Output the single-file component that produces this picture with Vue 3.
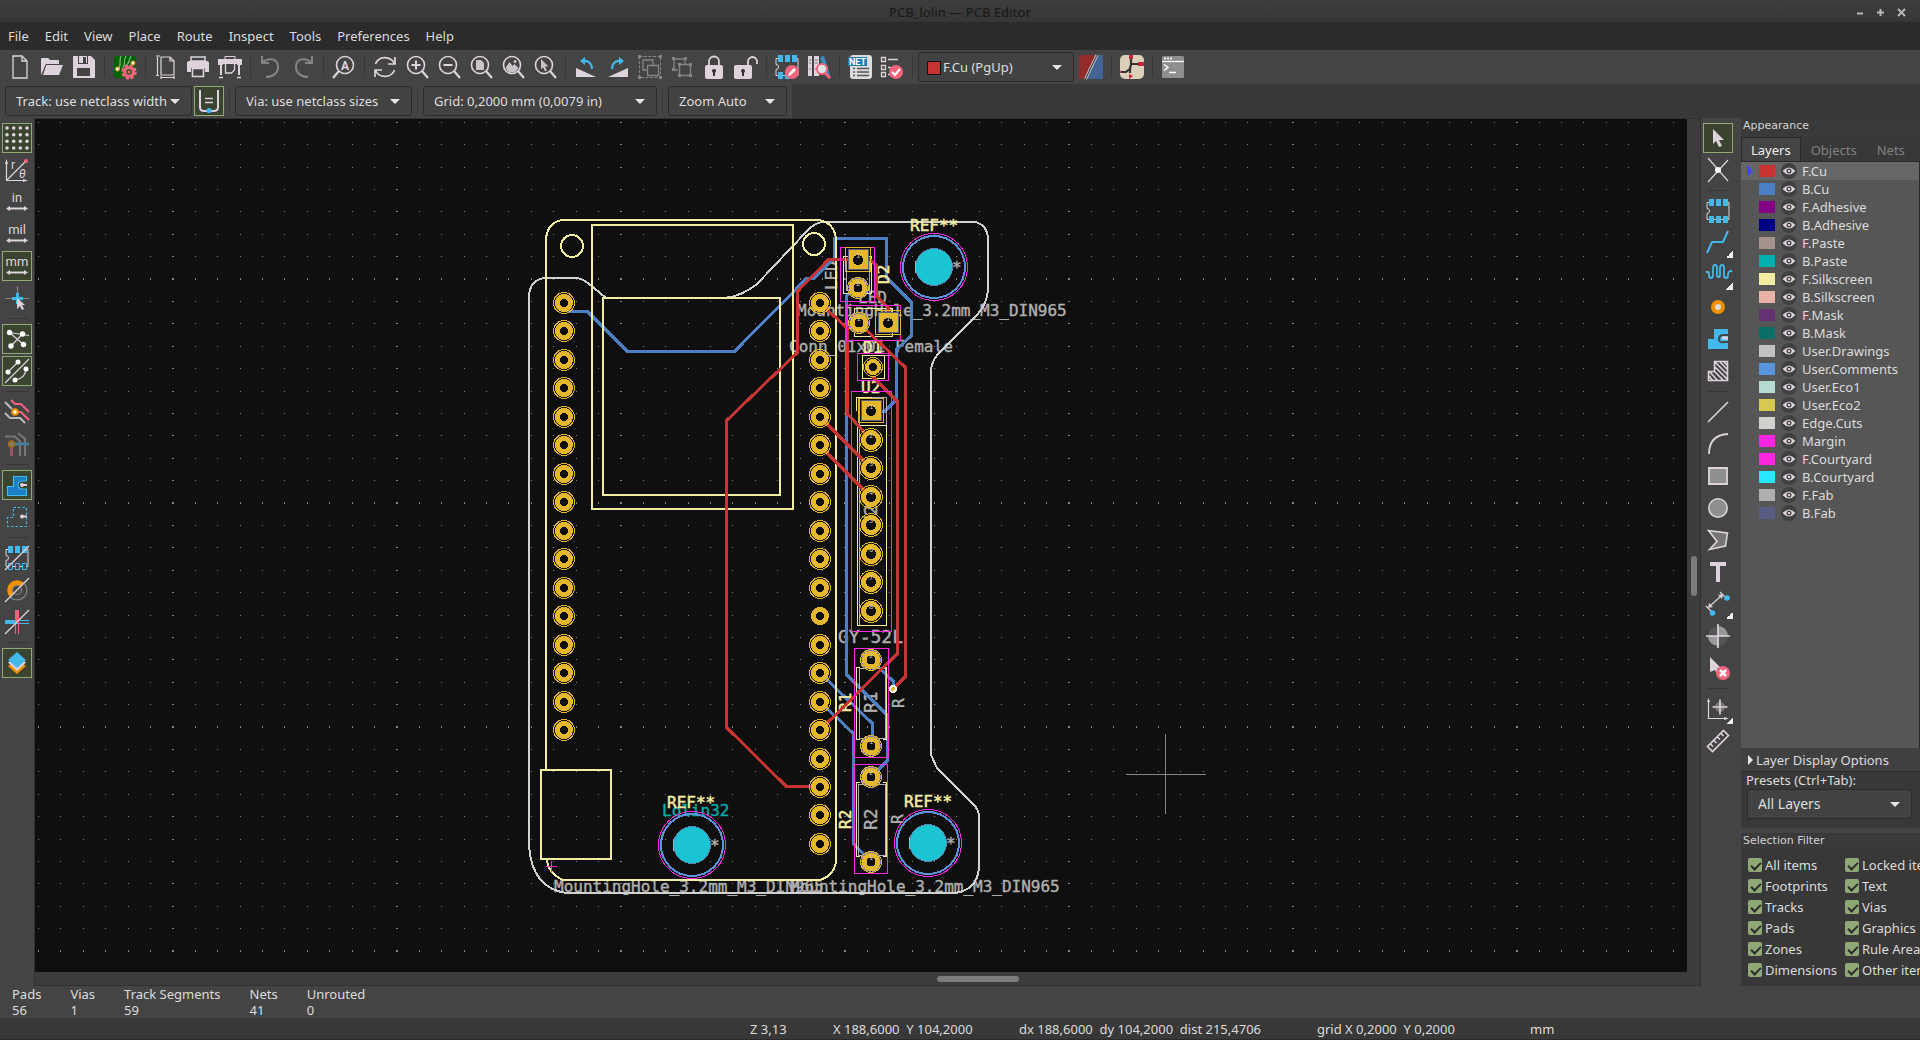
<script setup>
import { ref } from 'vue'

const L = '#ded3dd'
const B = '#42b8eb'
const G = '#848484'
const R = '#f2647e'
const O = '#f29100'

const lens = `<circle cx="11" cy="10" r="8.5" fill="none" stroke="${L}" stroke-width="1.6"/><path d="M17 16l6 7" stroke="${L}" stroke-width="2.2"/>`
const chipBody = `<path d="M3.500 3.500H1V9.500a2.500 2.500 0 0 1 0 5V20.500H23V3.500H20" fill="none" stroke="${L}" stroke-width="1"/>`
const curve = (flip) => `<g${flip ? ' transform="matrix(-1 0 0 1 24 0)"' : ''}><path d="M3 1v7h7M3.500 7.500C8 3 18 2 19 11c.5 7-5 11-12 11" fill="none" stroke="${G}" stroke-width="2"/></g>`
const arrows = `<path d="M1 18.500l4-2.500v1.500h14V16l4 2.500-4 2.500v-1.500H5V21z" fill="${L}"/>`
const unit = (t) => `<text x="12" y="12" text-anchor="middle" font-family="Roboto, sans-serif" font-size="13" fill="${L}">${t}</text>${arrows}`
const pointer = `M7 3l11 11h-5l3 6-3 1-3-6-3 3z`

const icons = {
  new: `<path d="M5 1h9l5 5v17H5zM14 1v5h5" fill="none" stroke="${L}" stroke-width="1.300"/>`,
  open: `<path d="M1 20V4q0-1 1-1h6l2 2h8q1 0 1 1v3H6z" fill="${L}"/><path d="M6 10h17l-4 10H2z" fill="${L}"/><path d="M2.500 20L6 9.500h17" fill="none" stroke="#444" stroke-width="1"/>`,
  save: `<path d="M1 1h18l4 4v18H1z" fill="${L}"/><path d="M6 1h10v8H6z" fill="#444"/><path d="M7 1h8v7H7z" fill="${L}"/><path d="M11 2h3v6h-3zM5 13h13v8H5z" fill="#444"/>`,
  setup: `<rect x="1" y="1" width="22" height="22" rx="3" fill="#006400"/><path d="M8 1C5 8 10 9 4 16M13 1C9 8 14 9 9 14M18 1c-3 5-1 8-6 10" fill="none" stroke="#7fb07f" stroke-width="1.300"/><circle cx="4.500" cy="14" r="2" fill="#fff" stroke="${O}"/><circle cx="20" cy="8" r="2" fill="#fff" stroke="${O}"/><circle cx="16" cy="17" r="4.500" fill="#006400" stroke="${R}" stroke-width="3.500"/><circle cx="16" cy="17" r="6.500" fill="none" stroke="${R}" stroke-width="2.500" stroke-dasharray="3.100 2"/><circle cx="16" cy="17" r="1.500" fill="${R}"/>`,
  page: `<path d="M7 2h9l4 4v14H7zM16 2v4h4M3.500 2v18M2 1h4M2 20.500h3M7 22.500h13M7 21v3M20 21v3" fill="none" stroke="${L}" stroke-width="1.200"/>`,
  print: `<path d="M5 2h14v4H5z" fill="none" stroke="${L}" stroke-width="1.500"/><path d="M3 6h18q2 0 2 2v9h-4v-4H5v4H1V8q0-2 2-2z" fill="${L}"/><path d="M6.500 13.500h11v8h-11z" fill="none" stroke="${L}" stroke-width="1.600"/>`,
  plot: `<path d="M7 1.500h10v3H7z" fill="none" stroke="${L}"/><path d="M0 4h24v6h-5V9H5v1H0zM2 10h2v10H2zM20 10h2v10h-2z" fill="${L}"/><path d="M7.500 9v9h6l3-3V9M1 22.500h4M19 22.500h4" fill="none" stroke="${L}" stroke-width="1.300"/>`,
  undo: curve(false),
  redo: curve(true),
  find: `<g transform="matrix(-1 0 0 1 24 0)">${lens}</g><text x="13" y="14.500" text-anchor="middle" font-family="Roboto, sans-serif" font-weight="700" font-size="12" fill="${L}">A</text>`,
  refresh: `<path d="M22 2v7h-7M2 22v-7h7M21.500 8.500C18 1 6 0 2.500 9M2.500 15.500C6 23 18 24 21.500 15" fill="none" stroke="${L}" stroke-width="1.700"/>`,
  zin: `${lens}<path d="M6.500 10h9M11 5.500v9" stroke="${L}" stroke-width="2"/>`,
  zout: `${lens}<path d="M6.500 10h9" stroke="${L}" stroke-width="2"/>`,
  zfit: `${lens}<path d="M7 5h5l3 3v7H7z" fill="#c9c3c8"/>`,
  zobj: `${lens}<path d="M4.500 13l4-6 3 4 2-2 4 4q-3 5-7 4.500t-6-4.500z" fill="#c9c3c8"/><circle cx="14" cy="6.500" r="1.500" fill="#c9c3c8"/>`,
  zsel: `${lens}<path d="M8 4l7.500 7.500h-3.500l2 4-2 .8-2-4-2 2z" fill="#c9c3c8"/>`,
  ccw: `<path d="M2 13v9h20z" fill="${L}"/><path d="M9 6c6-1 9 3 9 8" fill="none" stroke="${B}" stroke-width="2.200"/><path d="M11 2v8L6 6z" fill="${B}"/>`,
  cw: `<path d="M22 13v9H2z" fill="${L}"/><path d="M15 6c-6-1-9 3-9 8" fill="none" stroke="${B}" stroke-width="2.200"/><path d="M13 2v8l5-4z" fill="${B}"/>`,
  group: `<path d="M1.500 1.500h21v21h-21z" fill="none" stroke="${G}" stroke-dasharray="3 1.500"/><path d="M9 15H5V5h10v5M9.500 10.500h11v10h-11z" fill="none" stroke="${G}" stroke-width="1.300"/><path d="M0 0h3v3H0zM21 0h3v3h-3zM0 21h3v3H0zM21 21h3v3h-3z" fill="${G}"/>`,
  ungroup: `<path d="M8 15H4V4h11v5M9.500 9.500h11v11h-11z" fill="none" stroke="${G}" stroke-width="1.300"/><path d="M2 2h3v3H2zM14 2h3v3h-3zM2 13h3v3H2zM8 8h3v3H8zM19 8h3v3h-3zM19 19h3v3h-3zM8 19h3v3H8z" fill="${G}"/>`,
  lock: `<rect x="3" y="10" width="18" height="14" rx="2" fill="${L}"/><path d="M7 10V6.500a5 5 0 0 1 10 0V10" fill="none" stroke="${L}" stroke-width="1.800"/><circle cx="12" cy="16" r="2" fill="#333"/><path d="M11 16h2v5h-2z" fill="#333"/>`,
  unlock: `<rect x="0" y="10" width="18" height="14" rx="2" fill="${L}"/><path d="M14 10V6.500a4.500 4.500 0 0 1 9 0V9" fill="none" stroke="${L}" stroke-width="1.800"/><circle cx="9" cy="16" r="2" fill="#333"/><path d="M8 16h2v5H8z" fill="#333"/>`,
  fped: `${chipBody}<path d="M3 0h5v7H3zM10 0h5v7h-5zM17 0h5v7h-5zM3 17h5v7H3zM10 17h5v7h-5z" fill="${B}"/><circle cx="17" cy="17" r="7" fill="${R}"/><path d="M13 21l1-3 5-5 2 2-5 5z" fill="#fff"/>`,
  lib: `<path d="M1 1h4v20H1zM7 1h5v20H7z" fill="${L}"/><path d="M2 5h2M2 8h2M8 5h3M8 8h3M2 14h2M8 14h3" stroke="#777"/><path d="M13 2l4-1 6 19-4 1z" fill="#2f8fc0"/><circle cx="15" cy="14" r="5" fill="#dfe6ea" stroke="${R}" stroke-width="2"/><path d="M18 18l5 5" stroke="${R}" stroke-width="3"/>`,
  net: `<rect x="2" y="0" width="22" height="24" rx="3" fill="#dcdcdc"/><path d="M5 13.500h2M9 13.500h12M5 17h2M9 17h12M5 20.500h2M9 20.500h12" stroke="#555" stroke-width="1.700"/><path d="M0 2h19v9H0z" fill="#1a81b0"/><text x="9.500" y="10" text-anchor="middle" font-family="Roboto, sans-serif" font-weight="700" font-size="9" fill="#fff">NET</text>`,
  drc: `<path d="M1.500 2.500h4v4h-4zM1.500 10.500h4v4h-4zM1.500 17.500h4v4h-4z" fill="none" stroke="${L}" stroke-width="1.300"/><path d="M8 4.500h10M8 12.500h3M8 19.500h2" stroke="${L}" stroke-width="1.300"/><circle cx="16" cy="17" r="7" fill="${R}"/><path d="M12 17l3 3 5-6" fill="none" stroke="#fff" stroke-width="2"/>`,
  pair: `<path d="M0 0h24v24H0z" fill="#436395"/><path d="M0 0h17L6 24H0z" fill="#942a2a"/><path d="M18 0L6.500 24" stroke="#bbb" stroke-width="3"/><path d="M18 0L6.500 24" stroke="#333" stroke-width="1"/>`,
  board: `<rect width="24" height="24" rx="5" fill="#ddd0b8"/><path d="M11 3v7l-1 3v5M11 9h9M1 17h5l5-4" fill="none" stroke="#333" stroke-width="2.200"/><path d="M9 0h4v4H9zM18 7h6v4h-6zM0 14l1 4h-1zM9 19l4 2-4 3z" fill="#c8243f"/>`,
  console: `<rect x="1" y="1" width="22" height="22" rx="1.500" fill="#8f8f8f"/><path d="M1 6.500h22" stroke="#fff" stroke-width="1.200"/><path d="M3 3.500h2M6 3.500h2M9 3.500h2" stroke="#fff" stroke-width="1.500"/><path d="M3 9.500l4 3-4 3M8 17.500h7" fill="none" stroke="#fff" stroke-width="1.500"/>`,
  auto: `<path d="M3 1v17q0 4 4 4h10q4 0 4-4V1" fill="none" stroke="${L}" stroke-width="2"/><path d="M8 9.500h8M8 13.500h8" stroke="${L}" stroke-width="1.300"/><circle cx="12" cy="21.500" r="2.600" fill="${B}"/>`,

  grid: [2, 8.7, 15.3, 22].map((y) => [2, 8.7, 15.3, 22].map((x) => `<circle cx="${x}" cy="${y}" r="1.800" fill="${L}"/>`).join('')).join(''),
  polar: `<path d="M1.500 3v19.500H22M2 22L21 3" fill="none" stroke="${L}" stroke-width="1.200"/><path d="M0 6l1.500-5L3 6zM18 21l5 1.500-5 1.500z" fill="${L}"/><circle cx="21" cy="3" r="2" fill="${R}"/><text x="6" y="11" font-family="Roboto, sans-serif" font-size="12" fill="${L}">r</text><text x="14" y="20" font-family="Roboto, sans-serif" font-style="italic" font-size="12" fill="${L}">θ</text>`,
  in: unit('in'),
  mil: unit('mil'),
  mm: unit('mm'),
  cursor: `<path d="M12.500 0v12M0 12.500h24" stroke="${G}" stroke-width="1.200"/><path d="M12.500 7v11M7 12.500h11" stroke="${B}" stroke-width="3"/><path d="M12 12l8 7h-3l2 4-2 1-2-4-3 3z" fill="${L}"/>`,
  rats: `<path d="M4.500 5.500L24 8.500M4.500 5.500L18.500 17.500M17.500 7L6 19" stroke="${L}" stroke-width="1.200"/><g fill="#fff"><circle cx="4.500" cy="5.500" r="2.700"/><circle cx="17.500" cy="7" r="2.700"/><circle cx="6" cy="19" r="2.700"/><circle cx="18.500" cy="17.500" r="2.700"/></g>`,
  curved: `<path d="M0 24L24 0M3 13L13 3M10 21q10-1 11-11" fill="none" stroke="${L}" stroke-width="1.200"/><g fill="#fff"><circle cx="3" cy="13" r="2.500"/><circle cx="13" cy="3" r="2.500"/><circle cx="10" cy="21" r="2.500"/><circle cx="21" cy="10" r="2.500"/></g>`,
  hc: `<path d="M0 2l7 7M0 13l5 5h10l5 5" fill="none" stroke="#bbb" stroke-width="2"/><path d="M6 0l4 4h6l8 8M10 12h6l8 8" fill="none" stroke="${R}" stroke-width="2"/><circle cx="10" cy="12" r="2.800" fill="#fff" stroke="${O}" stroke-width="2"/>`,
  hc2: `<g opacity=".5"><path d="M0 4.500h10l5 5V24M13 1l7 6v17" fill="none" stroke="#aaa" stroke-width="2"/><path d="M10 12h14" stroke="${B}" stroke-width="3"/><path d="M6.500 14v10" stroke="${R}" stroke-width="3"/><circle cx="6.500" cy="12" r="2.800" fill="#bbb" stroke="${O}" stroke-width="2"/></g>`,
  zone: `<path d="M8.500 3.500h13V8H18q-5 0-5 4t5 4h3.500v6.500h-19v-9h6z" fill="#1a7fc4" stroke="${B}" stroke-width="1.200"/><path d="M17 12h5" stroke="${L}" stroke-width="2"/><circle cx="17" cy="12" r="2" fill="${L}"/>`,
  zone2: `<path d="M8.500 2.500h13v19h-19v-9h6z" fill="none" stroke="${B}" stroke-width="1.200" stroke-dasharray="2.500 2"/><path d="M17 11.500h5" stroke="${L}" stroke-width="2"/><circle cx="17" cy="11.500" r="2" fill="${L}"/>`,
  pads: `${chipBody}<path d="M3 0h5v7H3zM10 0h5v7h-5zM17 0h5v7h-5z" fill="${B}"/><path d="M3.500 17.500h4v6h-4zM10.500 17.500h4v6h-4zM17.500 17.500h4v6h-4z" fill="#444" stroke="${B}"/><path d="M0 24L24 0" stroke="${L}" stroke-width="1.300"/>`,
  vias: `<path d="M6.700 17.300A7.500 7.500 0 0 1 17.300 6.700" fill="none" stroke="${O}" stroke-width="5"/><circle cx="12" cy="12" r="4.500" fill="none" stroke="${G}" stroke-width="1.200"/><path d="M5 19A9.500 9.500 0 0 0 19 5" fill="none" stroke="${G}" stroke-width="1.200"/><path d="M0 24L24 0" stroke="${L}" stroke-width="1.300"/>`,
  tracks: `<path d="M0 12h12" stroke="${B}" stroke-width="4"/><path d="M12 10.500h12M12 13.500h12" stroke="${B}"/><path d="M12 0v12" stroke="${R}" stroke-width="4"/><path d="M10.500 12v12M13.500 12v12" stroke="${R}"/><path d="M0 24L24 0" stroke="${L}" stroke-width="1.300"/>`,
  layers: `<path d="M12 9l9 6-9 8-9-8z" fill="${O}"/><path d="M12 6l9 5.500L12 20l-9-8.500z" fill="${L}"/><path d="M12 1l9 8-9 8-9-8z" fill="${B}"/>`,

  select: `<path d="${pointer}" fill="${L}"/>`,
  local: `<path d="M2 0l20 23M22 2L2 24" stroke="${L}" stroke-width="1.200"/><circle cx="12" cy="12" r="3" fill="#fff"/>`,
  fp: `${chipBody}<path d="M3 0h5v7H3zM10 0h5v7h-5zM17 0h5v7h-5zM3 17h5v7H3zM10 17h5v7h-5zM17 17h5v7h-5z" fill="${B}"/>`,
  route: `<path d="M1 22l5-11h11l5-11" fill="none" stroke="${B}" stroke-width="2"/>`,
  tune: `<path d="M0 9h2q1 0 1 3t2 3 2-3V5q0-3 2-3t2 3v7q0 2 1.500 2t1.500-2V5q0-3 2-3t2 3v7q0 3 2 3t2-3 2-4h2" fill="none" stroke="${B}" stroke-width="1.800"/>`,
  via: `<circle cx="12" cy="12" r="5" fill="#ddd" stroke="${O}" stroke-width="4"/>`,
  fill: `<path d="M8 2h14v20H2V12h6z" fill="${B}"/><path d="M22 8h-4q-5 0-5 4t5 3h4" fill="none" stroke="#444" stroke-width="2"/><path d="M16 11h6" stroke="${L}" stroke-width="3"/>`,
  rule: `<path d="M8.500 2.500h13v19h-19v-9h6zM9 3l13 13M14 3l8 8M18 3l4 4M9 8l13 13M8 12l10 10M3 12l9 10M3 17l4 5" fill="none" stroke="${L}" stroke-width="1.600"/>`,
  line: `<path d="M2 22L22 2" stroke="${L}" stroke-width="1.600"/>`,
  arc: `<path d="M3 22Q3 3 22 2" fill="none" stroke="${L}" stroke-width="1.800"/>`,
  rect: `<path d="M3 4h18v16H3z" fill="#8f8f8f" stroke="${L}" stroke-width="1.800"/>`,
  circle: `<circle cx="12" cy="12" r="9.200" fill="#8f8f8f" stroke="${L}" stroke-width="1.600"/>`,
  poly: `<path d="M2.500 2.500L21.500 5l-2 13-16 3.500 7.500-8z" fill="#777" stroke="${L}" stroke-width="1.600"/>`,
  text: `<path d="M4 2h16v4h-6v16h-4V6H4z" fill="${L}"/>`,
  dim: `<path d="M0 14l6 6M14 0l6 6M4 14L15 4" stroke="${L}" stroke-width="1.200"/><path d="M2 16l1-5 4 4zM17 2l-1 5-4-4z" fill="${L}"/><circle cx="21" cy="6" r="2.800" fill="${B}"/><circle cx="6.500" cy="21" r="2.800" fill="${B}"/>`,
  target: `<circle cx="12" cy="12" r="10" fill="#555"/><path d="M12 2v20A10 10 0 0 1 2 12h20A10 10 0 0 0 12 2z" fill="#999"/><path d="M0 12h24M12 0v24" stroke="${L}" stroke-width="1.700"/>`,
  del: `<path d="M4 1l11 11h-4l3 5-3 1-2-4-5 2z" fill="${L}"/><circle cx="17" cy="17" r="7" fill="${R}"/><path d="M14 14l6 6M20 14l-6 6" stroke="#fff" stroke-width="2.500"/>`,
  origin: `<path d="M2.500 4v17.500H20" fill="none" stroke="${L}" stroke-width="1.200"/><path d="M1 5l1.500-4L4 5zM18 20l5 1.500-5 1.500z" fill="${L}"/><circle cx="14" cy="10" r="5" fill="#777"/><path d="M6.500 10h15M14 2.500v15" stroke="${L}" stroke-width="1.600"/>`,
  ruler: `<path d="M17.500 1.500l5 5-16 16-5-5zM8 11.500l2.500 2.500M11.500 8l2.500 2.500M15 4.500l2.500 2.500M4.500 15l2.500 2.500" fill="none" stroke="${L}" stroke-width="1.600"/>`
}

const menus = ['File', 'Edit', 'View', 'Place', 'Route', 'Inspect', 'Tools', 'Preferences', 'Help']
const mainTools = ['new', 'open', 'save', '|', 'setup', '|', 'page', 'print', 'plot', '|', 'undo', 'redo', '|', 'find', '|', 'refresh', 'zin', 'zout', 'zfit', 'zobj', 'zsel', '|', 'ccw', 'cw', 'group', 'ungroup', 'lock', 'unlock', '|', 'fped', 'lib', '|', 'net', 'drc', '|', '#', 'pair', '|', 'board', '|', 'console']
const leftTools = ['grid', 'polar', 'in', 'mil', 'mm', 'cursor', '|', 'rats', 'curved', '|', 'hc', 'hc2', '|', 'zone', 'zone2', '|', 'pads', 'vias', 'tracks', '|', 'layers']
const leftOn = ['grid', 'mm', 'rats', 'curved', 'zone', 'layers']
const rightTools = ['select', 'local', '|', 'fp', 'route', 'tune', 'via', 'fill', 'rule', '|', 'line', 'arc', 'rect', 'circle', 'poly', 'text', 'dim', 'target', 'del', '|', 'origin', 'ruler']
const flyouts = ['route', 'tune', 'dim', 'origin']

const tab = ref('Layers')
const layer = ref('F.Cu')
const layers = [
  ['F.Cu', '#c83434'], ['B.Cu', '#4d7fc4'], ['F.Adhesive', '#840084'], ['B.Adhesive', '#000084'],
  ['F.Paste', '#a5948e'], ['B.Paste', '#00b0b0'], ['F.Silkscreen', '#f2eda1'], ['B.Silkscreen', '#e8b2a7'],
  ['F.Mask', '#63326f'], ['B.Mask', '#0a6f69'], ['User.Drawings', '#c2c2c2'], ['User.Comments', '#5994dc'],
  ['User.Eco1', '#b4dbd2'], ['User.Eco2', '#d8c852'], ['Edge.Cuts', '#d0d2cd'], ['Margin', '#ff26e2'],
  ['F.Courtyard', '#ff26e2'], ['B.Courtyard', '#26e9ff'], ['F.Fab', '#afafaf'], ['B.Fab', '#585d84']
]
const filters = ref(['All items', 'Locked items', 'Footprints', 'Text', 'Tracks', 'Vias', 'Pads', 'Graphics', 'Zones', 'Rule Areas', 'Dimensions', 'Other items'].map((name) => ({ name, on: true })))
const stats = [['Pads', '56'], ['Vias', '1'], ['Track Segments', '59'], ['Nets', '41'], ['Unrouted', '0']]

/* board grid: one dot every 22.4 px, every tenth row and column heavier */
let dots = ''
for (let j = -7; j < 80; j++) {
  const y = Math.floor(279.1 + j * 22.4)
  const tall = j % 10 === 0
  for (let i = -6; i < 120; i++) {
    const x = Math.floor(172.8 + i * 22.4)
    const wide = i % 10 === 0
    dots += `M${wide ? x : x} ${tall ? y - 1 : y}h${wide ? 2 : 1}v${tall ? 2 : 1}h-${wide ? 2 : 1}z`
  }
}

const rowY = (k) => Math.round(303 + k * 28.47)
const modulePads = [
  ...Array.from({ length: 16 }, (_, k) => ({ x: 564, y: rowY(k), ring: true })),
  ...Array.from({ length: 20 }, (_, k) => ({ x: 820, y: rowY(k), ring: k !== 11 }))
]
const squarePads = [{ x: 858, y: 260, n: 1 }, { x: 888, y: 323, n: 1 }, { x: 871, y: 411, n: 1 }]
const headerPads = [440, 468, 497, 525, 554, 582, 611].map((y, i) => ({ x: 871, y, n: i + 2 }))
const roundPads = [
  { x: 858, y: 288, n: 2 }, { x: 859, y: 323, n: 2 },
  { x: 871, y: 660, n: 2 }, { x: 871, y: 746, n: 1 }, { x: 871, y: 777, n: 2 }, { x: 871, y: 862, n: 1 }
]
const holes = [{ x: 934, y: 267 }, { x: 928, y: 843 }, { x: 692, y: 845 }]
</script>

<template>
  <div class="app">
    <header class="title">
      <h1>PCB_lolin — PCB Editor</h1>
      <div class="win">
        <button aria-label="Minimize"><svg width="9" height="9"><path d="M2 5.500h6" /></svg></button>
        <button aria-label="Maximize"><svg width="9" height="9"><path d="M1 4.500h7M4.500 1v7" /></svg></button>
        <button aria-label="Close"><svg width="9" height="9"><path d="M1 1l7 7M8 1l-7 7" /></svg></button>
      </div>
    </header>
    <nav class="menu"><button v-for="m in menus" :key="m">{{ m }}</button></nav>

    <div class="bar">
      <template v-for="(t, i) in mainTools" :key="i">
        <span v-if="t === '|'" class="sep"></span>
        <span v-else-if="t === '#'" class="pick layer-pick">
          <select aria-label="Active layer"><option>F.Cu (PgUp)</option></select>
          <i class="chip"></i><svg class="caret" width="10" height="5"><path d="M0 0h10L5 5z" /></svg>
        </span>
        <button v-else class="tool" :aria-label="t"><svg width="24" height="24" viewBox="0 0 24 24" v-html="icons[t]"></svg></button>
      </template>
    </div>

    <div class="row2">
      <div class="bar">
        <span class="pick track"><select aria-label="Track width"><option>Track: use netclass width</option></select><svg class="caret" width="10" height="5"><path d="M0 0h10L5 5z" /></svg></span>
        <button class="tool on" aria-label="auto"><svg width="24" height="24" viewBox="0 0 24 24" v-html="icons.auto"></svg></button>
        <span class="sep"></span>
        <span class="pick via"><select aria-label="Via size"><option>Via: use netclass sizes</option></select><svg class="caret" width="10" height="5"><path d="M0 0h10L5 5z" /></svg></span>
        <span class="sep"></span>
        <span class="pick gridsel"><select aria-label="Grid"><option>Grid: 0,2000 mm (0,0079 in)</option></select><svg class="caret" width="10" height="5"><path d="M0 0h10L5 5z" /></svg></span>
        <span class="sep"></span>
        <span class="pick zoom"><select aria-label="Zoom"><option>Zoom Auto</option></select><svg class="caret" width="10" height="5"><path d="M0 0h10L5 5z" /></svg></span>
      </div>
    </div>

    <main class="work">
      <div class="side">
        <template v-for="(t, i) in leftTools" :key="i">
          <span v-if="t === '|'" class="hsep"></span>
          <button v-else class="tool" :class="{ on: leftOn.includes(t) }" :aria-label="t"><svg width="24" height="24" viewBox="0 0 24 24" v-html="icons[t]"></svg></button>
        </template>
      </div>

      <section class="view">
        <svg class="board">
          <g transform="translate(-35 -119)" shape-rendering="crispEdges">
            <path :d="dots" fill="#858585" />

            <g class="mono fab">
              <text x="797" y="316">MountingHole_3.2mm_M3_DIN965</text>
              <text x="554" y="892">MountingHole_3.2mm_M3_DIN965</text>
              <text x="790" y="892">MountingHole_3.2mm_M3_DIN965</text>
              <text x="789" y="352">Conn_01x01_Female</text>
              <text x="858" y="303">LED</text>
              <text class="big" x="838" y="643">GY-52L</text>
              <text transform="translate(837 290) rotate(-90)">LED</text>
              <text class="big" transform="translate(877 526) rotate(-90)">U2</text>
              <text class="big" transform="translate(877 713) rotate(-90)">R1</text>
              <text class="big" transform="translate(877 830) rotate(-90)">R2</text>
              <text transform="translate(904 708) rotate(-90)">R</text>
              <text transform="translate(903 824) rotate(-90)">R</text>
            </g>
            <text class="mono teal" x="662" y="816">Lolin32</text>

            <g fill="none" stroke="#4d7fc4" stroke-width="3">
              <path d="M567 311H587L627 351H735L807 278H814L834 259V238H886V277L911 302V336L896 350V400L885 411H874" />
              <path d="M858 288L846 296V674L887 715L888 760L871 777" />
              <path d="M820 673L872 723V746" />
              <path d="M820 702L853 733V843L871 862" />
              <path d="M871 660L893 681V689" />
            </g>

            <path d="M529 846V296Q530 279 546 278H577Q583 279 588 283L606 298H725Q742 296 757 284L807 231Q815 222 824 222H975Q988 225 988 240V290Q987 304 977 315L942 350Q931 360 931 371V755L937 768L975 806Q979 811 979 817V868Q977 890 955 893H566Q532 888 529 846Z" fill="none" stroke="#d0d2cd" stroke-width="2" />

            <path d="M859.500 397.500h27v228h-27zM859.500 668.500h26v70h-26zM858.500 784.500h27v71h-27zM846.500 258.500h23v32h-23z" fill="none" stroke="#afafaf" />
            <g class="silk">
              <path d="M546 769V240Q547 222 563 220H819Q835 223 836 240V862Q833 877 819 880H563Q548 873 547 860" />
              <path d="M541 770h70v89h-70zM592 225h201v284H592zM603 298h177v197H603z" />
              <circle cx="572" cy="246" r="11" /><circle cx="814" cy="244" r="11" />
              <path class="thin" d="M857.500 425.500h29v200h-29zM856.500 411V397.500h15M843.500 256.500h28v37h-28zM854.500 308.500h38v28h-38zM862.500 355.500h22v23h-22zM860 667.500h-3.500v72h3.500M883 667.500h3.500v72h-3.500M860 782.500h-3.500v74h3.500M883 782.500h3.500v74h-3.500" />
            </g>
            <g class="mono silktext">
              <text x="910" y="231">REF**</text><text x="904" y="807">REF**</text><text x="667" y="808">REF**</text>
              <text x="863" y="353">D1</text><text x="861" y="393">U2</text>
              <text transform="translate(889 284) rotate(-90)">D2</text>
              <text transform="translate(851 712) rotate(-90)">R1</text>
              <text transform="translate(851 829) rotate(-90)">R2</text>
            </g>

            <g fill="none" stroke="#c83434" stroke-width="3">
              <path d="M858 259H829L797 292V353L726 421V727L786 786H820" />
              <path d="M858 259H869L876 265V295L888 308V323" />
              <path d="M820 303L847 328V413L871 440" />
              <path d="M859 323L905 367V677L893 689" />
              <path d="M873 377L897 401V654L820 730" />
              <path d="M820 417L871 468M820 446L871 497" />
            </g>

            <path d="M851.500 391.500h40v240h-40zM840.500 247.500h34v54h-34zM846.500 305.500h54v35h-54zM857.500 353.500h31v27h-31zM854.500 648.500h34v109h-34zM854.500 764.500h33v109h-33zM546 866.500h11M551.500 861v11" fill="none" stroke="#ff26e2" />

            <g v-for="(p, i) in modulePads" :key="'m' + i">
              <circle v-if="p.ring" :cx="p.x" :cy="p.y" r="10.500" class="ring" />
              <circle :cx="p.x" :cy="p.y" r="6.500" class="pad" stroke-width="5" />
            </g>
            <g v-for="(p, i) in headerPads" :key="'h' + i">
              <circle :cx="p.x" :cy="p.y" r="11.500" class="ring" />
              <circle :cx="p.x" :cy="p.y" r="7.500" class="pad" stroke-width="5" />
              <text :x="p.x" :y="p.y - 2" class="num">{{ p.n }}</text>
            </g>
            <g v-for="(p, i) in roundPads" :key="'r' + i">
              <circle :cx="p.x" :cy="p.y" r="7" class="pad" stroke-width="5" />
              <circle :cx="p.x" :cy="p.y" r="10.500" class="ring" />
              <circle :cx="p.x" :cy="p.y" r="9.500" fill="none" stroke="#7a7fae" stroke-dasharray="2 1" />
              <text :x="p.x" :y="p.y - 2" class="num">{{ p.n }}</text>
            </g>
            <circle cx="873" cy="367" r="9.500" class="ring" /><circle cx="873" cy="367" r="6" class="pad" stroke-width="4" />
            <g v-for="(p, i) in squarePads" :key="'s' + i">
              <rect :x="p.x - 12.5" :y="p.y - 12.5" width="25" height="24" class="ring" />
              <rect :x="p.x - 9.5" :y="p.y - 10.5" width="20" height="20" fill="#e5b72d" stroke="#585d84" />
              <circle :cx="p.x" :cy="p.y" r="5" fill="#0f0f0f" />
              <text :x="p.x" :y="p.y - 2" class="num">{{ p.n }}</text>
            </g>
            <circle cx="893" cy="689" r="3" fill="#e5b72d" stroke="#fff" stroke-width="2" />

            <g v-for="(h, i) in holes" :key="'o' + i" fill="none">
              <circle :cx="h.x" :cy="h.y" r="33.500" stroke="#ff26e2" />
              <circle :cx="h.x" :cy="h.y" r="31" stroke="#5994dc" stroke-width="2" />
              <circle :cx="h.x" :cy="h.y" r="18.500" fill="#1ac4d2" stroke="#5c7fae" />
              <path :d="`M${h.x - 18.5} ${h.y - 6}v12`" stroke="#c9a0c9" />
              <text class="mono fab" :x="h.x + 18" :y="h.y + 6">*</text>
            </g>

            <path d="M1126 774.500h80M1165.500 734v80" stroke="#858585" />
          </g>
        </svg>
        <div class="vscroll"><i></i></div>
        <div class="hscroll"><i></i></div>
      </section>

      <div class="side right">
        <template v-for="(t, i) in rightTools" :key="i">
          <span v-if="t === '|'" class="hsep"></span>
          <button v-else class="tool" :class="{ on: t === 'select', fly: flyouts.includes(t) }" :aria-label="t"><svg width="24" height="24" viewBox="0 0 24 24" v-html="icons[t]"></svg></button>
        </template>
      </div>

      <aside class="panel">
        <h2>Appearance</h2>
        <div class="tabs">
          <button v-for="t in ['Layers', 'Objects', 'Nets']" :key="t" :class="{ cur: tab === t }" @click="tab = t">{{ t }}</button>
        </div>
        <ul class="layers">
          <li v-for="l in layers" :key="l[0]" :class="{ cur: layer === l[0] }" @click="layer = l[0]">
            <i class="mark"></i>
            <i class="swatch" :style="{ background: l[1] }"></i>
            <svg width="16" height="16"><circle cx="8" cy="8" r="8" fill="#404040" /><path d="M1.500 8Q8 1 14.500 8Q8 15 1.500 8z" fill="#ded3dd" /><circle cx="8" cy="8" r="2.500" fill="#404040" /><circle cx="8" cy="8" r="1.200" fill="#ded3dd" /></svg>
            <span>{{ l[0] }}</span>
          </li>
        </ul>
        <button class="expand"><svg width="5" height="10"><path d="M0 0l5 5-5 5z" /></svg>Layer Display Options</button>
        <div class="presets">
          <label for="preset">Presets (Ctrl+Tab):</label>
          <span class="pick"><select id="preset"><option>All Layers</option></select><svg class="caret" width="10" height="5"><path d="M0 0h10L5 5z" /></svg></span>
        </div>
        <h2 class="fh">Selection Filter</h2>
        <div class="filters">
          <label v-for="f in filters" :key="f.name"><input v-model="f.on" type="checkbox" /><span>{{ f.name }}</span></label>
        </div>
      </aside>
    </main>

    <dl class="stats">
      <div v-for="s in stats" :key="s[0]"><dt>{{ s[0] }}</dt><dd>{{ s[1] }}</dd></div>
    </dl>
    <footer class="status">
      <span class="s-zoom">Z 3,13</span>
      <span class="s-pos">X 188,6000&nbsp; Y 104,2000</span>
      <span class="s-rel">dx 188,6000&nbsp; dy 104,2000&nbsp; dist 215,4706</span>
      <span class="s-grid">grid X 0,2000&nbsp; Y 0,2000</span>
      <span>mm</span>
    </footer>
  </div>
</template>

<style>
body { background: #383838; overflow: hidden; }
</style>

<style scoped>
* { box-sizing: border-box; margin: 0; padding: 0; }
.app { height: 100vh; display: flex; flex-direction: column; background: #444; color: #dcdcdc; font: 13px/16px "Noto Sans", "Open Sans", sans-serif; overflow: hidden; }
button { border: 0; background: none; color: inherit; font: inherit; }
i { display: block; }
svg { display: block; }

.title { flex: none; height: 22px; display: grid; grid-template-columns: 1fr auto 1fr; align-items: center; background: linear-gradient(#3d3d3d, #363636); }
.title h1 { grid-column: 2; font: 500 13px/20px "Noto Sans", sans-serif; color: #1c1c1c; padding-top: 2px; }
.win { display: flex; gap: 12px; justify-content: flex-end; padding: 2px 14px 0 0; }
.win path { fill: none; stroke: #b8b8b8; stroke-width: 2; }
.menu { flex: none; height: 28px; display: flex; background: #2b2b2b; }
.menu button { padding: 0 8px; }

.bar { flex: none; height: 34px; display: flex; align-items: center; padding-left: 4px; background: #444; }
.tool { flex: none; width: 30px; height: 30px; margin: 1px; display: flex; align-items: center; justify-content: center; border: 1px solid transparent; position: relative; }
.tool svg { overflow: visible; flex: none; }
.tool.on { background: #3b4430; border-color: #8fa876; }
.fly::after { content: ""; position: absolute; right: -1px; bottom: -1px; width: 7px; height: 7px; background: linear-gradient(135deg, transparent 50%, #eee 50%); }
.sep { flex: none; width: 1px; height: 22px; margin: 0 4px; background: #363636; }
.pick { position: relative; flex: none; display: block; height: 30px; margin: 0 1px; }
.pick select { appearance: none; width: 100%; height: 30px; padding: 0 10px; border: 1px solid #2c2c2c; border-radius: 3px; background: #424242; color: #dedede; font: inherit; }
.caret { position: absolute; right: 12px; top: 13px; fill: #e6e6e6; pointer-events: none; }
.layer-pick { width: 156px; }
.layer-pick select { padding-left: 24px; }
.chip { position: absolute; left: 9px; top: 9px; width: 14px; height: 14px; background: #c83434; border: 1px solid #111; }
.row2 { flex: none; background: #383838; display: flex; }
.row2 .bar { padding-right: 4px; }
.track { width: 187px; }
.via { width: 177px; }
.gridsel { width: 234px; }
.zoom { width: 119px; }

.work { flex: 1; min-height: 0; display: flex; }
.side { flex: none; width: 34px; padding: 4px 1px; display: flex; flex-direction: column; background: #444; }
.side.right { width: 40px; }
.hsep { flex: none; width: 22px; height: 1px; margin: 4px 5px; background: #363636; }

.view { flex: 1; min-width: 0; display: grid; grid-template-columns: 1fr 13px; grid-template-rows: 1fr 13px; border: 1px solid #303030; background: #3c3c3c; }
.board { width: 100%; height: 100%; background: #0f0f0f; overflow: hidden; }
.vscroll { padding: calc(50vh - 83px) 0 0 4px; }
.vscroll i { width: 6px; height: 40px; border-radius: 3px; background: #7c7c7c; }
.hscroll { display: flex; justify-content: center; padding: 4px 0 0 234px; }
.hscroll i { width: 82px; height: 6px; border-radius: 3px; background: #7c7c7c; }

.mono { font: 16px "DejaVu Sans Mono", monospace; }
.big { font-size: 18px; }
.fab { fill: #afafaf; stroke: #afafaf; stroke-width: 0.4; }
.teal { fill: #00aeae; stroke: #00aeae; stroke-width: 0.4; }
.silktext { fill: #f2eda1; stroke: #f2eda1; stroke-width: 0.5; }
.silk { fill: none; stroke: #f2eda1; stroke-width: 2; }
.silk .thin { stroke-width: 1; }
.ring { fill: none; stroke: #e5b72d; stroke-width: 1; }
.pad { fill: #0f0f0f; stroke: #e5b72d; }
.num { font: 7px "DejaVu Sans Mono", monospace; fill: #c8c8c8; text-anchor: middle; }

.panel { flex: none; width: 179px; display: flex; flex-direction: column; background: #383838; overflow: hidden; }
.panel h2 { flex: none; height: 19px; padding-left: 2px; font: 11px/15px "DejaVu Sans", sans-serif; color: #d4d4d4; background: #3a3a3a; }
.tabs { flex: none; height: 25px; display: flex; border-bottom: 1px solid #2a2a2a; color: #808080; }
.tabs button { padding: 2px 10px 0; }
.tabs .cur { background: #444; color: #eee; border: 1px solid #2a2a2a; border-bottom: 0; padding: 1px 9px 0; }
.layers { flex: 1; min-height: 0; list-style: none; background: #565656; border-right: 1px solid #2a2a2a; }
.layers li { height: 18px; display: flex; align-items: center; }
.layers li.cur { background: #666; }
.mark { width: 6px; height: 12px; margin: 0 6px; }
.cur .mark { background: #4444ff; clip-path: polygon(0 0, 100% 50%, 0 100%); }
.swatch { width: 16px; height: 12px; margin-right: 6px; }
.layers span { margin-left: 5px; }
.expand { flex: none; height: 24px; display: flex; align-items: center; gap: 3px; padding-left: 7px; background: #404040; border-bottom: 1px solid #2a2a2a; text-align: left; }
.expand svg { fill: #e6e6e6; }
.presets { flex: none; height: 56px; padding: 0 7px 0 5px; }
.presets label { display: block; height: 17px; }
.presets .pick select { font-size: 14px; }
.panel .fh { height: 22px; border-top: 5px solid #444; }
.filters { flex: none; height: 136px; padding: 4px 0 0 7px; display: grid; grid-template-columns: 97px 97px; grid-auto-rows: 21px; }
.filters label { display: flex; align-items: center; gap: 3px; white-space: nowrap; }
.filters input { appearance: none; flex: none; width: 14px; height: 14px; border-radius: 2px; background: #8fa876; }
.filters input:checked::after { content: ""; display: block; width: 8px; height: 4px; margin: 4px 3px; border: solid #2c2c2c; border-width: 0 0 2px 2px; transform: rotate(-45deg); }

.stats { flex: none; height: 32px; display: flex; padding-left: 12px; gap: 29px; background: #444; }
.status { flex: none; height: 22px; display: flex; align-items: center; padding-left: 750px; background: #383838; border-bottom: 1px solid #2a2a2a; white-space: nowrap; }
.s-zoom { width: 83px; }
.s-pos { width: 186px; }
.s-rel { width: 298px; }
.s-grid { width: 213px; }
</style>
